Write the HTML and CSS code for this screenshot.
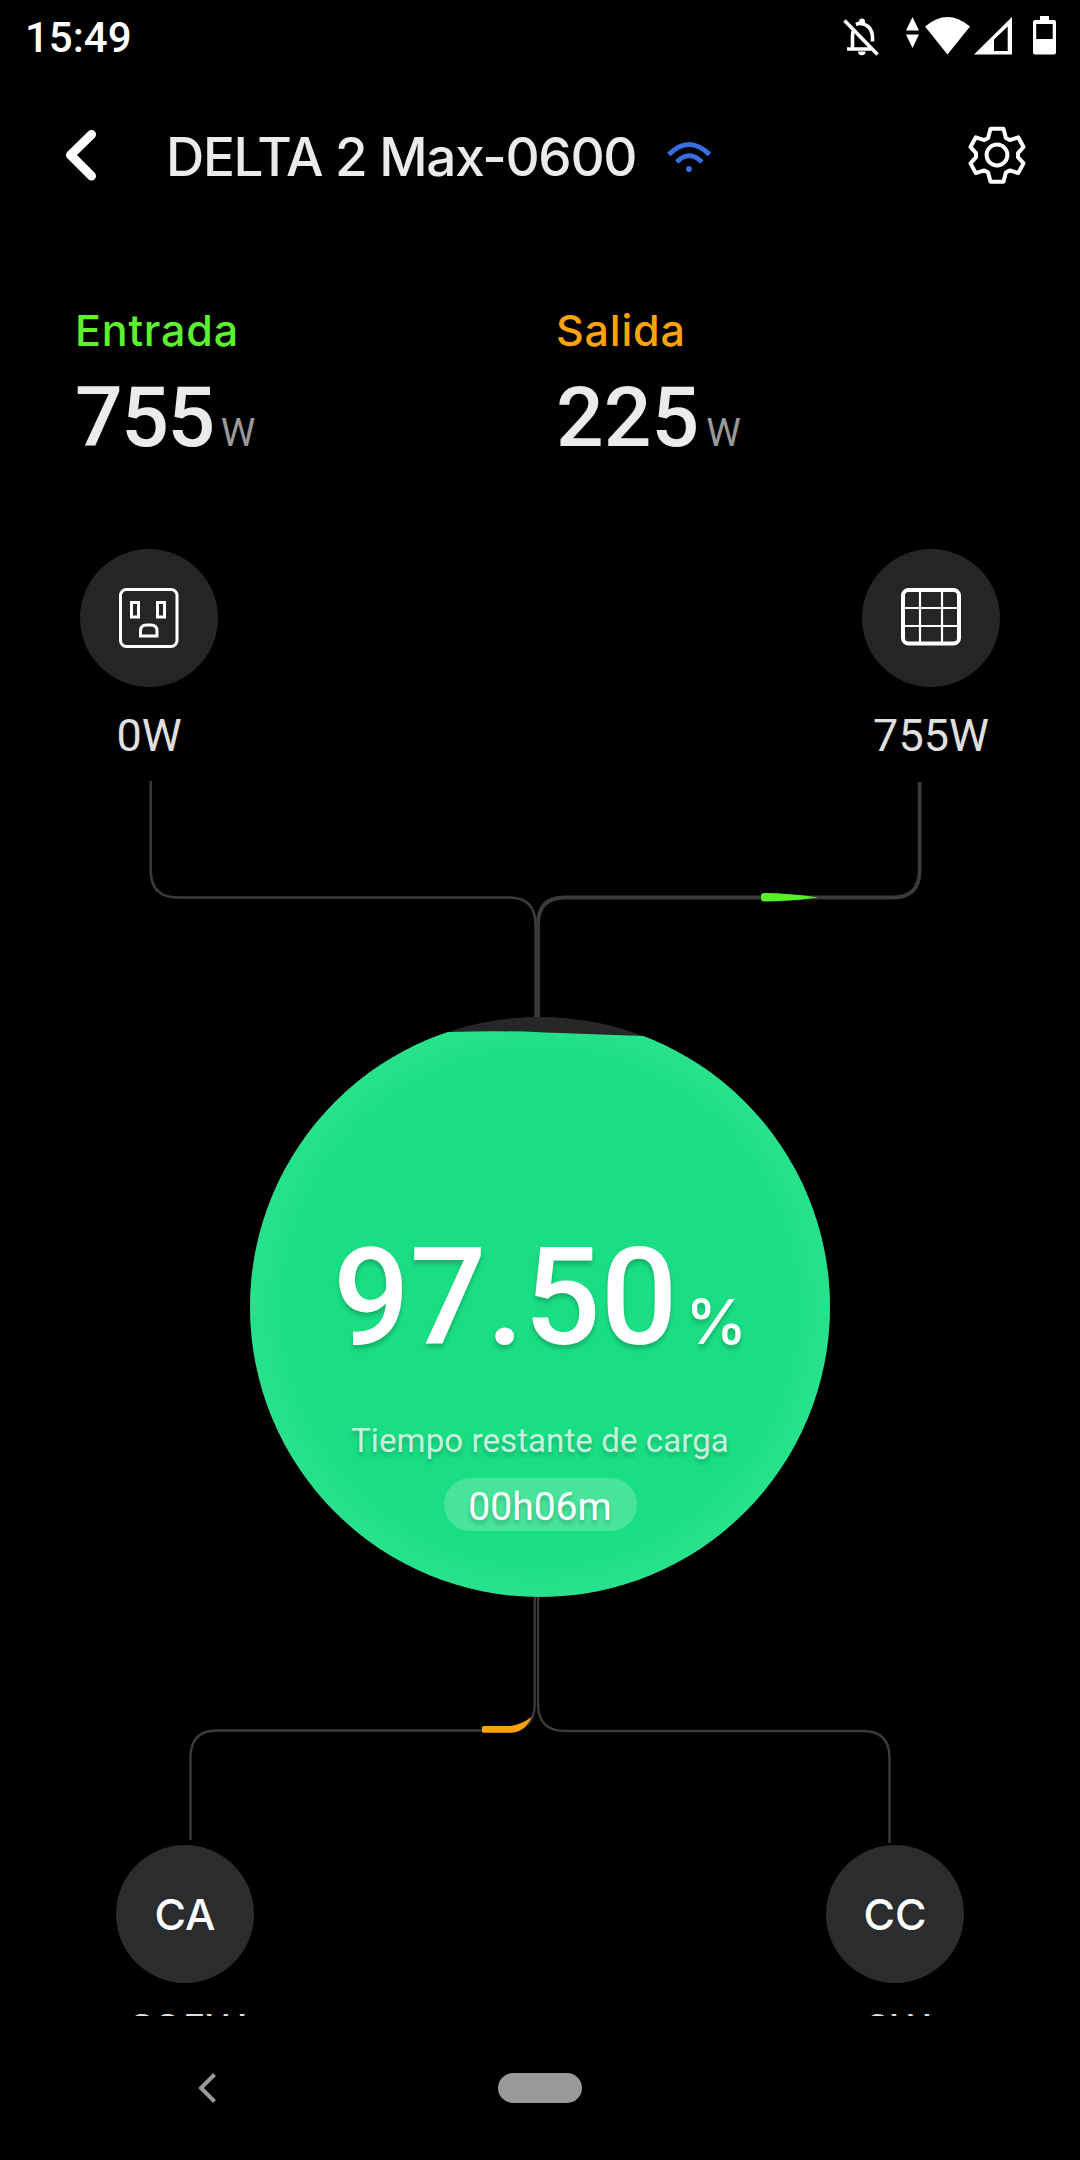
FILE: index.html
```html
<!DOCTYPE html>
<html lang="es">
<head>
  <meta charset="UTF-8">
  <title>DELTA 2 Max-0600</title>
  <link rel="stylesheet" href="styles.css">
</head>
<body>
  <div class="screen">
    <div class="status-bar">
      <span class="clock">15:49</span>
      <svg class="status-icons" width="220" height="75" viewBox="840 0 220 75">
        <!-- muted bell -->
        <g fill="none" stroke="#fff" stroke-width="3.6">
          <path d="M852.5 49V36q0-4 1.500-7M847 49h24M856 24.500l3-1.200q13 1 13.500 14.200v4"/>
          <path d="M844.500 20.500 877.500 54.500"/>
        </g>
        <path fill="#fff" d="M859 25v-3.500a3 3 0 0 1 6 0V25zM858 51.500h7.500a3.700 3.700 0 0 1-7.500 0z"/>
        <!-- data arrows -->
        <path fill="#fff" d="M906 30.500 912.500 17 919 30.500zM906 34.500h13l-6.500 13.500z"/>
        <!-- wifi -->
        <path fill="#fff" d="M925 26.500Q947.500 7.500 970 26.500L947.500 54.500z"/>
        <!-- signal -->
        <path fill="#fff" fill-rule="evenodd" d="M974 54.500 1012 17V54.500zM994 39.500V51h13.700V26.500z"/>
        <!-- battery -->
        <path fill="#fff" fill-rule="evenodd" d="M1040 16h9v4h5q2 0 2 2v30.500q0 2-2 2h-19q-2 0-2-2V22q0-2 2-2h5zM1036.200 24v15h16.500V24z"/>
      </svg>
    </div>

    <div class="header">
      <svg class="back" width="40" height="60" viewBox="0 0 40 60">
        <path d="M31.500 9.500 10.500 30 31.500 51" fill="none" stroke="#fff" stroke-width="9" stroke-linecap="round" stroke-linejoin="round"/>
      </svg>
      <h1 class="title">DELTA 2 Max-0600</h1>
      <svg class="wifi" width="44" height="32" viewBox="667 141 44 32">
        <g fill="none" stroke="#3a6ee0" stroke-width="4.800">
          <path d="M668.800 154.500Q689 134.500 709.500 154.500"/>
          <path d="M676.800 162Q689 149.500 702 162"/>
        </g>
        <circle cx="689" cy="169" r="2.900" fill="#3a6ee0"/>
      </svg>
      <svg class="gear" width="60" height="60" viewBox="967 125 60 60">
        <g fill="none" stroke="#fff" stroke-width="4" stroke-linejoin="round">
          <path d="M990.500 128.700h13l2.400 9.300 3.800 2.100 8.500-2.800 5.300 9.700-5.500 6.200v4l5.500 6.200-5.300 9.700-8.500-2.700-3.800 2.100-2.400 9.200h-13l-2.400-9.200-3.800-2.100-8.500 2.700-5.300-9.700 5.500-6.200v-4l-5.500-6.200 5.300-9.700 8.500 2.800 3.800-2.100z"/>
          <circle cx="997" cy="155" r="10.400"/>
        </g>
      </svg>
    </div>

    <div class="stats">
      <div class="stat input">
        <div class="stat-label">Entrada</div>
        <div class="stat-value">755<span class="unit">W</span></div>
      </div>
      <div class="stat output">
        <div class="stat-label">Salida</div>
        <div class="stat-value">225<span class="unit">W</span></div>
      </div>
    </div>

    <div class="nodes inputs">
      <div class="node">
        <div class="disc">
          <svg width="60" height="60" viewBox="0 0 60 60" fill="none" stroke="#fff" stroke-width="3">
            <rect x="1.500" y="1.500" width="56.500" height="57" rx="6"/>
            <path d="M12.500 14.500h7v14.500h-7zM38.500 14.500h7v14.500h-7z"/>
            <path d="M21.500 48v-5q0-6 6-6h4.500q6 0 6 6v5z"/>
          </svg>
        </div>
        <div class="node-power">0W</div>
      </div>
      <div class="node">
        <div class="disc">
          <svg width="60" height="60" viewBox="0 0 60 60" fill="none" stroke="#fff">
            <rect x="2" y="2" width="56" height="53.500" rx="5.500" stroke-width="4"/>
            <path d="M19 2v53M41 2v53M2 20h56M2 38h56" stroke-width="2.200"/>
          </svg>
        </div>
        <div class="node-power">755W</div>
      </div>
    </div>

    <svg class="wires" width="1080" height="256" viewBox="0 761 1080 256">
      <g fill="none" stroke="#3b3b3b">
        <path d="M150.700 781v89q0 27.500 27 27.500H509q26.500 0 26.500 27V1017" stroke-width="2.500"/>
        <path d="M919.700 782v88q0 27.500-27 27.500H565q-27 0-27 27V1017" stroke-width="3.800"/>
      </g>
      <path d="M764 893q25 0 54 4.500-29 4-54 4-3 0-3-3v-2.500q0-3 3-3z" fill="#55f326"/>
    </svg>

    <div class="battery">
      <svg class="level" width="580" height="580" viewBox="0 0 580 580">
        <defs>
          <radialGradient id="glow">
            <stop offset="0.850" stop-color="#1ade83"/>
            <stop offset="1" stop-color="#28e28c"/>
          </radialGradient>
          <clipPath id="fill"><path d="M0 15H200Q250 13.500 290 15.200T395 19H580V580H0z"/></clipPath>
        </defs>
        <circle cx="290" cy="290" r="290" fill="#272727"/>
        <circle cx="290" cy="290" r="290" fill="url(#glow)" clip-path="url(#fill)"/>
      </svg>
      <div class="reading">97.50<span class="percent">%</span></div>
      <div class="caption">Tiempo restante de carga</div>
      <div class="remaining">00h06m</div>
    </div>

    <svg class="wires" width="1080" height="248" viewBox="0 1597 1080 248">
      <g fill="none" stroke="#3b3b3b" stroke-width="2.400">
        <path d="M534.700 1597v107q0 26.500-27 26.500H217q-26.500 0-26.500 27V1840"/>
        <path d="M538 1597v107q0 27 27 27H863q26.500 0 26.500 27V1843"/>
      </g>
      <path d="M483.500 1726h27q10-1 21-9-7 15.700-21 15.700h-27q-1.500 0-1.500-1.500v-3.700q0-1.500 1.500-1.500z" fill="#ffa30a"/>
    </svg>

    <div class="nodes outputs">
      <div class="node">
        <div class="disc">CA</div>
        <div class="node-power">225W</div>
      </div>
      <div class="node">
        <div class="disc">CC</div>
        <div class="node-power">0W</div>
      </div>
    </div>
  </div>

  <div class="nav-bar">
    <svg width="20" height="32" viewBox="0 0 20 32">
      <path d="M17.500 2.500 4 16 17.500 29.500" fill="none" stroke="#999" stroke-width="4"/>
    </svg>
    <div class="home"></div>
  </div>
</body>
</html>
```
FILE: styles.css
```css
* {
  box-sizing: border-box;
}

body {
  margin: 0;
  width: 1080px;
  background: #000;
  color: #ebebeb;
  font-family: 'Inter', sans-serif;
}

svg {
  display: block;
}

.screen {
  height: 2016px;
  overflow: hidden;
}

.status-bar {
  display: flex;
  justify-content: space-between;
  height: 75px;
  padding: 0 20px 0 25px;
}

.clock {
  font-family: 'Roboto', sans-serif;
  font-size: 42px;
  font-weight: 500;
  line-height: 75px;
  color: #fff;
}

.header {
  display: flex;
  align-items: center;
  height: 160px;
  padding: 0 53px 0 60px;
}

.title {
  width: 468px;
  margin: 0 0 0 66px;
  padding-top: 3px;
  font-size: 53px;
  font-weight: 500;
  letter-spacing: -1.3px;
  white-space: nowrap;
}

.wifi {
  margin: 4px 0 0 33px;
}

.gear {
  margin-left: auto;
}

.stats {
  display: grid;
  grid-template-columns: 481px 1fr;
  padding: 70px 0 0 75px;
}

.stat-label {
  font-size: 43px;
  font-weight: 500;
  line-height: 50px;
  letter-spacing: 0.8px;
}

.input .stat-label {
  color: #5cf22f;
}

.output .stat-label {
  color: #ffa30a;
}

.stat-value {
  margin-top: 21px;
  font-family: 'Roboto', sans-serif;
  font-size: 84px;
  font-weight: 500;
  line-height: 84px;
}

.input .stat-value {
  letter-spacing: -1.5px;
}

.unit {
  margin-left: 7px;
  font-size: 39px;
  font-weight: 400;
  line-height: 0;
  color: #999;
}

.nodes {
  display: flex;
  justify-content: space-between;
}

.inputs {
  padding: 89px 80px 0;
}

.outputs {
  padding: 0 116px;
}

.node {
  width: 138px;
}

.disc {
  display: flex;
  align-items: center;
  justify-content: center;
  height: 138px;
  border-radius: 50%;
  background: #252525;
}

.outputs .disc {
  background: #2b2c2d;
  color: #fff;
  font-size: 43px;
  font-weight: 500;
}

.node-power {
  margin-top: 24px;
  font-family: 'Roboto', sans-serif;
  font-size: 45px;
  line-height: 50px;
  text-align: center;
  color: #e0e0e0;
}

.outputs .node-power {
  margin-top: 23px;
  padding-left: 5px;
}

.battery {
  position: relative;
  display: flex;
  flex-direction: column;
  align-items: center;
  width: 580px;
  height: 580px;
  margin: 0 auto;
  padding-top: 211px;
  color: #fff;
  font-family: 'Roboto', sans-serif;
  text-shadow: 0 4px 4px rgba(0, 0, 0, 0.2);
}

.level {
  position: absolute;
  top: 0;
  left: 0;
  z-index: -1;
}

.reading {
  font-size: 135px;
  font-weight: 500;
  line-height: 140px;
}

.percent {
  margin-left: 8px;
  font-family: 'Inter', sans-serif;
  font-size: 62px;
  line-height: 0;
}

.caption {
  margin-top: 53px;
  font-size: 33px;
  line-height: 40px;
  letter-spacing: 0.1px;
  color: rgba(255, 255, 255, 0.75);
}

.remaining {
  width: 193px;
  height: 53px;
  margin-top: 17px;
  padding-top: 4px;
  border-radius: 27px;
  background: rgba(255, 255, 255, 0.2);
  font-size: 39px;
  line-height: 50px;
  text-align: center;
}

.nav-bar {
  display: flex;
  align-items: center;
  height: 144px;
  padding-left: 197px;
}

.home {
  width: 84px;
  height: 30px;
  margin-left: 281px;
  border-radius: 15px;
  background: #999;
}
```
